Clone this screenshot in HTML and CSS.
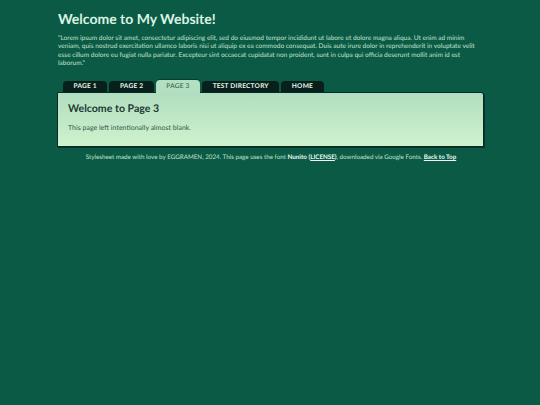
FILE: index.html
```html
<!DOCTYPE html>
<html lang="en">
  <head>
    <meta charset="UTF-8" />
    <title>Page 3</title>
    <link rel="stylesheet" href="styles.css">
  </head>
  <body>
    <div class="container">
      <header class="site-header">
        <h1>Welcome to My Website!</h1>
        <p>"Lorem ipsum dolor sit amet, consectetur adipiscing elit, sed do eiusmod tempor incididunt ut labore et dolore magna aliqua. Ut enim ad minim veniam, quis nostrud exercitation ullamco laboris nisi ut aliquip ex ea commodo consequat. Duis aute irure dolor in reprehenderit in voluptate velit esse cillum dolore eu fugiat nulla pariatur. Excepteur sint occaecat cupidatat non proident, sunt in culpa qui officia deserunt mollit anim id est laborum."</p>
      </header>
      <nav class="tabs">
        <a class="tab" href="#">PAGE 1</a>
        <a class="tab" href="#">PAGE 2</a>
        <a class="tab active" href="#">PAGE 3</a>
        <a class="tab" href="#">TEST DIRECTORY</a>
        <a class="tab" href="#">HOME</a>
      </nav>
      <main class="panel">
        <h2>Welcome to Page 3</h2>
        <p>This page left intentionally almost blank.</p>
      </main>
      <footer class="site-footer">
        Stylesheet made with love by EGGRAMEN, 2024. This page uses the font <b>Nunito</b> <b>(<a href="#">LICENSE</a>)</b>, downloaded via Google Fonts. <a class="top-link" href="#">Back to Top</a>
      </footer>
    </div>
  </body>
</html>
```

FILE: styles.css
```css
* {
  margin: 0;
  padding: 0;
  box-sizing: border-box;
}
body {
  background: #0a5a45;
  color: #c4e2cd;
  font-family: "Lato", "Noto Sans", sans-serif;
  text-rendering: geometricPrecision;
}
.container {
  width: 426px;
  margin-left: 58px;
}
.site-header {
  padding-top: 10px;
}
.site-header h1 {
  font-size: 14px;
  line-height: 17px;
  font-weight: 700;
  color: #dcf3e3;
}
.site-header p {
  margin-top: 8px;
  width: 420px;
  font-size: 6.55px;
  line-height: 8.4px;
}
.tabs {
  display: flex;
  gap: 2px;
  margin-top: 11.4px;
  padding-left: 5px;
  height: 12px;
  align-items: flex-end;
}
.tab {
  height: 11px;
  padding: 0 10.5px;
  border-radius: 4px 4px 0 0;
  background: #07201c;
  color: #e6f5ea;
  font-size: 6.6px;
  font-weight: 700;
  line-height: 11px;
  letter-spacing: 0.2px;
  text-decoration: none;
}
.tab.active {
  position: relative;
  z-index: 1;
  height: 13px;
  margin-bottom: -1px;
  line-height: 12px;
  background: #b4e0c2;
  color: #2a5547;
  font-weight: 400;
  box-shadow: 0 -1px 0 #0a3d30;
}
.panel {
  height: 55px;
  margin-left: -1px;
  padding: 10px 10px;
  border: 1px solid #0a2b25;
  border-radius: 0 3px 0 0;
  background: linear-gradient(#b1dec0, #cff2cd);
  color: #1a3b33;
  box-shadow: 1px 1px 0 #07332a;
}
.panel h2 {
  font-size: 10.6px;
  line-height: 13px;
  font-weight: 700;
}
.panel p {
  margin-top: 8px;
  font-size: 7px;
  line-height: 9px;
  color: #33584c;
}
.site-footer {
  margin-top: 7px;
  text-align: center;
  font-size: 6.25px;
  line-height: 8px;
}
.site-footer b {
  color: #eef9f1;
}
.site-footer a {
  color: #eef9f1;
}
.top-link {
  font-weight: 700;
}
```
